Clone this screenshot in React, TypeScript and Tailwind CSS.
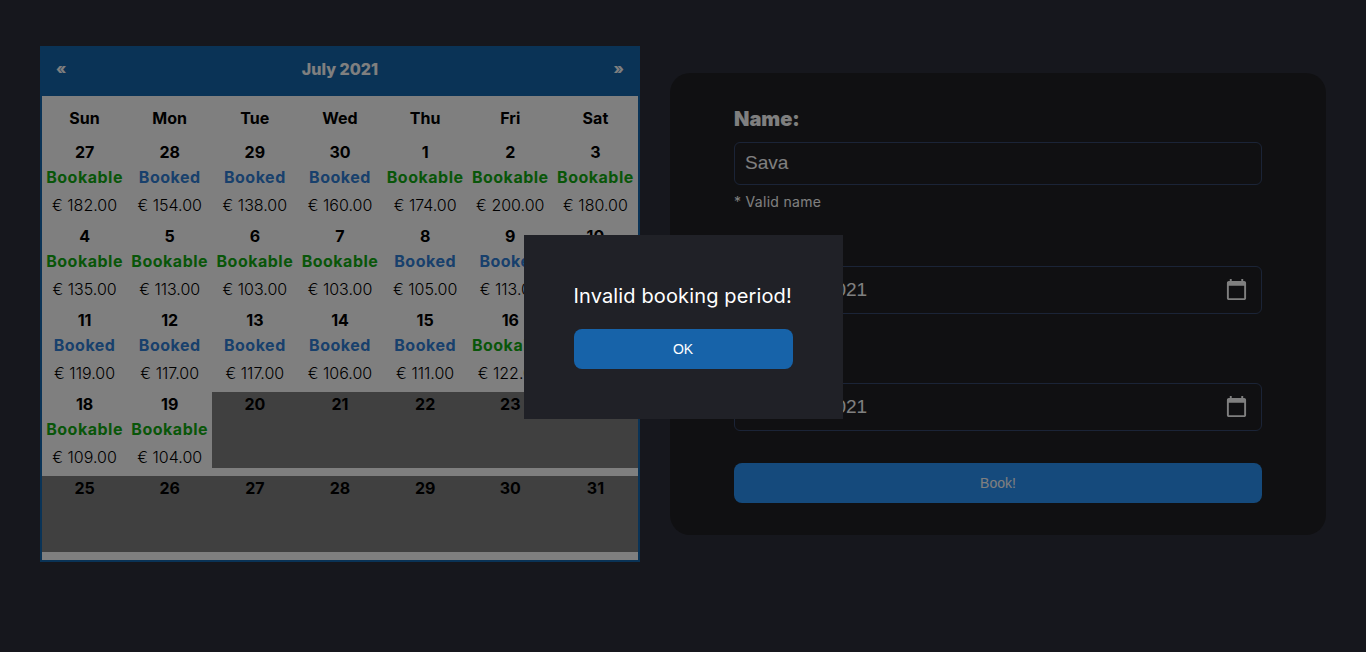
const poppinsLike = "[font-family:Inter,'Noto_Sans',sans-serif]";

type Day = { n: number; status?: "Bookable" | "Booked"; price?: string };

const B = "Bookable" as const;
const K = "Booked" as const;

const WEEKDAYS = ["Sun", "Mon", "Tue", "Wed", "Thu", "Fri", "Sat"];

const DAYS: Day[] = [
  { n: 27, status: B, price: "182.00" },
  { n: 28, status: K, price: "154.00" },
  { n: 29, status: K, price: "138.00" },
  { n: 30, status: K, price: "160.00" },
  { n: 1, status: B, price: "174.00" },
  { n: 2, status: B, price: "200.00" },
  { n: 3, status: B, price: "180.00" },
  { n: 4, status: B, price: "135.00" },
  { n: 5, status: B, price: "113.00" },
  { n: 6, status: B, price: "103.00" },
  { n: 7, status: B, price: "103.00" },
  { n: 8, status: K, price: "105.00" },
  { n: 9, status: K, price: "113.00" },
  { n: 10, status: K, price: "120.00" },
  { n: 11, status: K, price: "119.00" },
  { n: 12, status: K, price: "117.00" },
  { n: 13, status: K, price: "117.00" },
  { n: 14, status: K, price: "106.00" },
  { n: 15, status: K, price: "111.00" },
  { n: 16, status: B, price: "122.00" },
  { n: 17, status: B, price: "118.00" },
  { n: 18, status: B, price: "109.00" },
  { n: 19, status: B, price: "104.00" },
  { n: 20 },
  { n: 21 },
  { n: 22 },
  { n: 23 },
  { n: 24 },
  { n: 25 },
  { n: 26 },
  { n: 27 },
  { n: 28 },
  { n: 29 },
  { n: 30 },
  { n: 31 },
];

function DayCell({ day }: { day: Day }) {
  return (
    <div className={`h-[76px] text-center ${day.status ? "" : "bg-[#808080]"}`}>
      <div className="h-6 text-[16px] leading-6 font-bold text-black">{day.n}</div>
      {day.status && (
        <>
          <div
            className={`h-[26px] text-[16px] leading-[26px] font-bold tracking-[0.5px] whitespace-nowrap ${
              day.status === "Bookable" ? "text-[#12ac12]" : "text-[#3080d8]"
            }`}
          >
            {day.status}
          </div>
          <div className="h-[30px] text-[16px] leading-[30px] font-light text-black whitespace-nowrap">
            € {day.price}
          </div>
        </>
      )}
    </div>
  );
}

function Calendar() {
  return (
    <div className={`w-[600px] shrink-0 border-2 border-[#1466ac] bg-white ${poppinsLike}`}>
      <div className="-mx-0.5 -mt-0.5 flex h-[50px] items-center justify-between bg-[#1466ac] px-4 pb-1 font-extrabold text-white">
        <span className="text-[15px]">«</span>
        <span className="text-[16px]">July 2021</span>
        <span className="text-[15px]">»</span>
      </div>
      <div className="grid h-11 grid-cols-7 items-center text-center text-[16px] font-bold text-black">
        {WEEKDAYS.map((d) => (
          <div key={d}>{d}</div>
        ))}
      </div>
      <div className="grid grid-cols-7 gap-y-2 pb-2">
        {DAYS.map((d, i) => (
          <DayCell key={i} day={d} />
        ))}
      </div>
    </div>
  );
}

function DateField({ label, value }: { label: string; value: string }) {
  return (
    <div>
      <label className={`block h-[23px] text-[20px] leading-[23px] font-black text-white ${poppinsLike}`}>
        {label}
      </label>
      <input
        type="date"
        defaultValue={value}
        className="mt-[11px] h-12 w-full rounded-md border border-[#36486e] bg-transparent pr-[12px] pl-[32px] font-['Liberation_Sans',sans-serif] text-[19px] text-white [color-scheme:dark] outline-none [&::-webkit-calendar-picker-indicator]:h-[25px] [&::-webkit-calendar-picker-indicator]:w-[25px] [&::-webkit-calendar-picker-indicator]:p-0"
      />
    </div>
  );
}

function BookingForm() {
  return (
    <form className="mt-[27px] h-[462px] w-[656px] shrink-0 rounded-[20px] bg-[#202024] px-16 pt-[35px]">
      <label className={`block h-[23px] text-[20px] leading-[23px] font-black text-white ${poppinsLike}`}>
        Name:
      </label>
      <input
        type="text"
        defaultValue="Sava"
        className="mt-[11px] block h-[43px] w-full rounded-md border border-[#36486e] bg-transparent px-[10px] pb-0.5 font-['Liberation_Sans',sans-serif] text-[19px] text-white outline-none"
      />
      <p className={`mt-2 h-[18px] text-[14px] leading-[18px] tracking-[0.3px] text-white ${poppinsLike}`}>
        * Valid name
      </p>
      <div className="mt-[21px]">
        <DateField label="From:" value="2021-07-20" />
      </div>
      <div className="mt-[35px]">
        <DateField label="To:" value="2021-07-21" />
      </div>
      <button
        type="button"
        className="mt-8 h-10 w-full rounded-lg bg-[#2a94f8] font-['Liberation_Sans',sans-serif] text-[14px] text-white"
      >
        Book!
      </button>
    </form>
  );
}

export default function App() {
  return (
    <div className="min-h-screen bg-[#2c2e3a]">
      <div className="flex items-start gap-[30px] pt-[46px] pl-10">
        <Calendar />
        <BookingForm />
      </div>
      <div className="fixed inset-0 flex items-center justify-center bg-black/50 pt-0.5">
        <div className="h-[184px] w-[319px] bg-[#202127] px-[50px] pt-[47px]">
          <p className={`h-7 text-[20px] leading-7 tracking-[0.14px] whitespace-nowrap text-white ${poppinsLike}`}>
            Invalid booking period!
          </p>
          <button
            type="button"
            className="mt-[19px] h-10 w-[219px] rounded-lg bg-[#1763a9] font-['Liberation_Sans',sans-serif] text-[14px] text-white"
          >
            OK
          </button>
        </div>
      </div>
    </div>
  );
}
